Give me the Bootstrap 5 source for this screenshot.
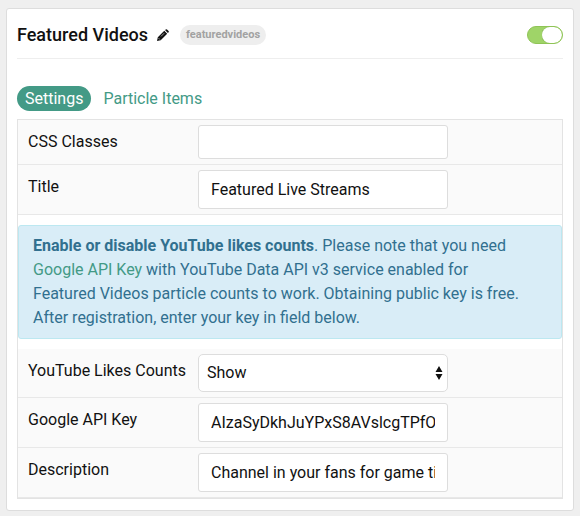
<!DOCTYPE html>
<html lang="en">
<head>
<meta charset="utf-8">
<meta name="viewport" content="width=device-width, initial-scale=1">
<title>Featured Videos</title>
<link href="https://cdn.jsdelivr.net/npm/bootstrap@5.3.0/dist/css/bootstrap.min.css" rel="stylesheet">
<style>
  body { font-family: Roboto, "Liberation Sans", sans-serif; font-size: 16px; line-height: 24px; color: #111; background: #efefef; padding: 8px 6px 5px; }
  a { color: #439a86; text-decoration: none; }
  .panel { border: 1px solid #ddd; border-radius: 3px; padding: 10px 10px 11px; }
  .panel-head { padding-bottom: 7px; border-bottom: 1px solid #eee; }
  .panel-title { font-size: 18px; line-height: 32px; font-weight: 500; }
  .edit-btn { line-height: 0; color: #111; margin-left: 9px; }
  .id-tag { font-size: 11px; line-height: 20px; font-weight: 700; color: #a2a2a2; background: #eee; padding: 0 6px; margin-left: 11px; }
  .switch.form-check-input { width: 36px; height: 18px; margin: 0; border-color: #8fc456; background-color: #9fd468; background-size: 20px; background-position: 14px center;
    background-image: url("data:image/svg+xml,%3Csvg xmlns='http://www.w3.org/2000/svg' viewBox='0 0 20 16'%3E%3Crect x='-1' y='0' width='20' height='16' rx='8' fill='%238fbd60'/%3E%3Crect x='0' y='0' width='20' height='16' rx='8' fill='%23fff'/%3E%3C/svg%3E"); }
  .tabs { margin-top: 27px; margin-bottom: 8px; gap: 4px; }
  .tabs .nav-link { line-height: 25px; padding: 0 8px; border-radius: 13px; color: #439a86; }
  .tabs .nav-link.active { background: #439a86; color: #fff; }
  .fields { border: 1px solid #e3e3e3; }
  .field-row { background: #fafafa; border-bottom: 1px solid #e8e8e8; padding: 5px 10px; }
  .field-name { flex: 0 0 170px; padding-top: 5px; }
  .field-box { flex: 0 1 250px; min-width: 0; }
  .field-box .form-control, .field-box .form-select { font-size: 16px; line-height: 24px; height: 39px; padding: 0 12px; color: #111; border: 1px solid #ddd; border-radius: 3px; background-color: #fff; }
  .field-box .form-control.short { height: 34px; }
  .field-box .form-select { height: 38px; padding: 0 20px 0 8px; border-radius: 5px; background-size: 8px 16px; background-position: right 4px center;
    background-image: url("data:image/svg+xml,%3Csvg xmlns='http://www.w3.org/2000/svg' viewBox='0 0 8 16'%3E%3Cpath d='M4 1 7.5 7h-7zM4 15 .5 9h7z' fill='%23111'/%3E%3C/svg%3E"); }
  .note { color: #31708f; background: #d9edf7; border: 1px solid #bce8f1; border-radius: 3px; padding: 8px 35px 8px 14px; margin: 10px 0; }
</style>
</head>
<body>
<main class="panel bg-white">
  <header class="panel-head d-flex align-items-center">
    <h1 class="panel-title m-0">Featured Videos</h1>
    <button type="button" class="edit-btn border-0 bg-transparent p-0" aria-label="Edit title">
      <svg width="12" height="12" viewBox="0 0 12 12" aria-hidden="true">
        <path fill="currentColor" d="M0 12 .8 8.3 7.3 1.8 10.2 4.7 3.7 11.2ZM8 1.1 8.8.4Q9.4-.1 10 .4L11.6 2Q12.1 2.6 11.6 3.2L10.9 4Z"/>
        <path d="M1.5 9.1 2.9 10.5M4 7.4 7.2 4.2" stroke="#fff" stroke-width=".6"/>
      </svg>
    </button>
    <span class="id-tag rounded-pill">featuredvideos</span>
    <input class="switch form-check-input rounded-pill ms-auto" type="checkbox" role="switch" aria-label="Enabled" checked>
  </header>

  <nav class="tabs nav nav-pills">
    <a class="nav-link active" href="#settings" aria-current="page">Settings</a>
    <a class="nav-link" href="#items">Particle Items</a>
  </nav>

  <form class="fields" id="settings">
    <div class="field-row d-flex">
      <label class="field-name" for="css">CSS Classes</label>
      <div class="field-box"><input class="form-control short" id="css" type="text"></div>
    </div>
    <div class="field-row d-flex">
      <label class="field-name" for="title">Title</label>
      <div class="field-box"><input class="form-control" id="title" type="text" value="Featured Live Streams"></div>
    </div>
    <div class="note"><strong>Enable or disable YouTube likes counts</strong>. Please note that you need <a href="#key">Google API Key</a> with YouTube Data API v3 service enabled for Featured Videos particle counts to work. Obtaining public key is free. After registration, enter your key in field below.</div>
    <div class="field-row d-flex">
      <label class="field-name" for="likes">YouTube Likes Counts</label>
      <div class="field-box"><select class="form-select" id="likes"><option>Show</option><option>Hide</option></select></div>
    </div>
    <div class="field-row d-flex">
      <label class="field-name" for="key">Google API Key</label>
      <div class="field-box"><input class="form-control" id="key" type="text" value="AIzaSyDkhJuYPxS8AVslcgTPfO"></div>
    </div>
    <div class="field-row d-flex">
      <label class="field-name" for="desc">Description</label>
      <div class="field-box"><input class="form-control" id="desc" type="text" value="Channel in your fans for game time"></div>
    </div>
  </form>
</main>
<script src="https://cdn.jsdelivr.net/npm/bootstrap@5.3.0/dist/js/bootstrap.bundle.min.js"></script>
</body>
</html>
